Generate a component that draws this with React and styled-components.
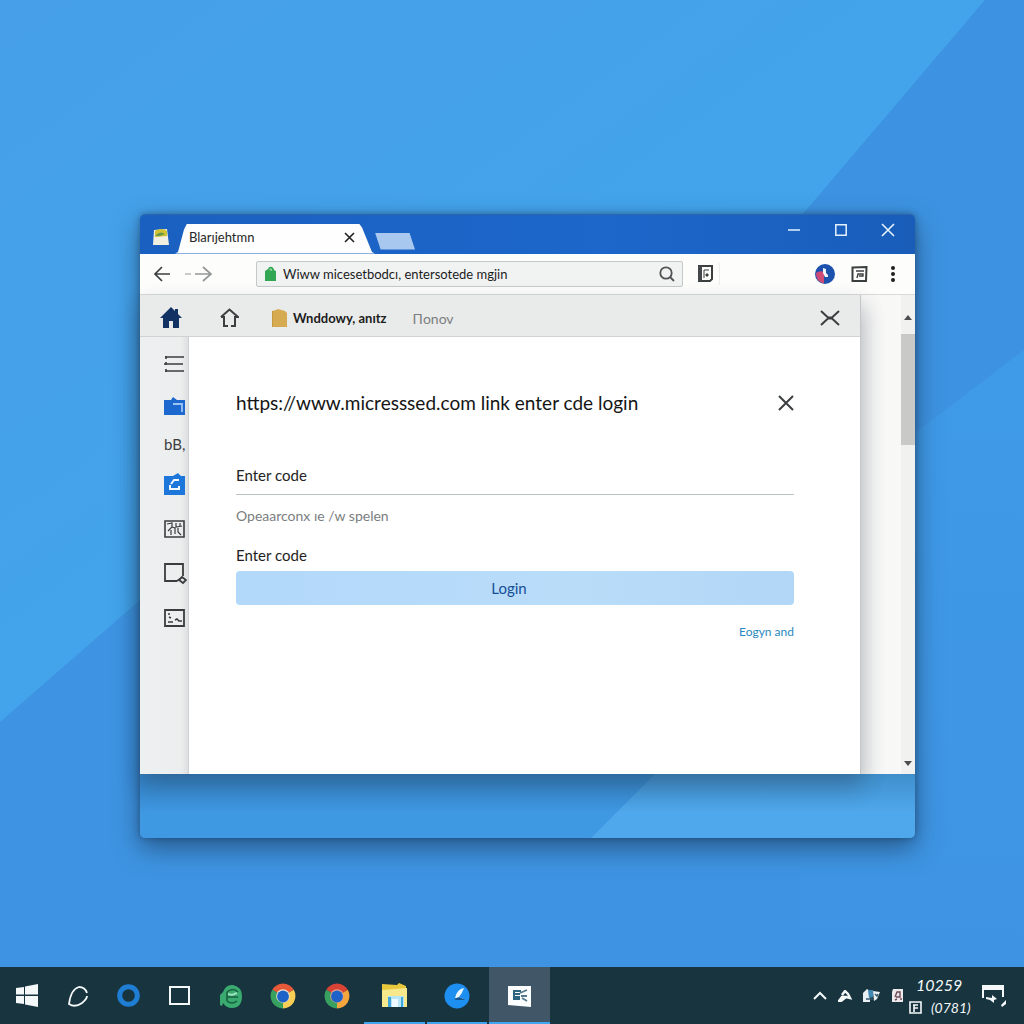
import React from "react";
import styled, { createGlobalStyle } from "styled-components";

const GlobalStyle = createGlobalStyle`
  *, *::before, *::after { box-sizing: border-box; }
  body { margin: 0; }
  body, button, input { font-family: Lato, "Open Sans", "Liberation Sans", sans-serif; }
  button { border: 0; padding: 0; background: none; color: inherit; cursor: pointer; }
  svg { display: block; flex: none; }
  h1, p { margin: 0; font-weight: 400; }
`;

const Desktop = styled.div`
  position: relative;
  isolation: isolate;
  min-height: 100vh;
  display: flex;
  flex-direction: column;
  background: #3e94e2;
`;

const WallpaperArt = styled.svg`
  position: absolute;
  inset: 0;
  z-index: -1;
  width: 100%;
  height: 100%;
`;

const Workspace = styled.main`
  flex: 1;
  display: flex;
  flex-direction: column;
  justify-content: center;
  padding: 84px 109px 0 140px;
`;

const Window = styled.section`
  display: flex;
  flex-direction: column;
  border-radius: 5px;
  box-shadow: 0 10px 26px rgba(25, 50, 80, 0.6), 0 0 6px rgba(25, 55, 90, 0.5);
`;

const TitleBar = styled.header`
  display: flex;
  align-items: flex-end;
  height: 40px;
  padding: 0 16px 0 12px;
  border-top: 1px solid #2b65ad;
  border-radius: 5px 5px 0 0;
  background: linear-gradient(90deg, #1a60c0, #1d67ca 60%, #195db9);
`;

const AppMark = styled.span`
  align-self: center;
  padding-top: 6px;
`;

const BrowserTab = styled.div`
  display: flex;
  align-items: center;
  justify-content: space-between;
  width: 200px;
  height: 30px;
  margin-left: 5px;
  padding: 0 20px 3px 14px;
  background: #fdfefd;
  clip-path: polygon(0 100%, 3px 95%, 9px 6px, 12px 0, 184px 0, 187px 4px, 197px 95%, 100% 100%);
  font-size: 13px;
  color: #262626;
`;

const NewTab = styled.button`
  width: 40px;
  height: 17px;
  margin-bottom: 4px;
  background: #a9c8f0;
  clip-path: polygon(0 0, 86% 0, 100% 100%, 14% 100%);
`;

const WindowControls = styled.div`
  display: flex;
  align-self: flex-start;
  gap: 25px;
  margin: 4px 0 0 auto;
  color: #e4f2ff;
`;

const IconButton = styled.button`
  display: grid;
  place-items: center;
  flex: none;
  width: ${({ $size = 22 }) => $size}px;
  height: ${({ $size = 22 }) => $size}px;
  color: ${({ $color = "#3c3f40" }) => $color};
`;

const Toolbar = styled.div`
  display: flex;
  align-items: center;
  height: 41px;
  padding: 0 11px;
  border-bottom: 1px solid #d9dbda;
  background: #fdfefc;
`;

const History = styled.nav`
  display: flex;
  align-items: center;
  gap: 12px;
  width: 105px;
`;

const AddressBar = styled.form`
  flex: 0 1 427px;
  display: flex;
  align-items: center;
  gap: 6px;
  min-width: 0;
  height: 26px;
  padding: 0 4px 0 7px;
  border: 1px solid #c6c9c9;
  border-radius: 2px;
  background: #f1f3f3;
`;

const AddressInput = styled.input`
  flex: 1;
  min-width: 0;
  padding: 0;
  border: 0;
  outline: 0;
  background: none;
  font-size: 13px;
  color: #1c1c1c;
`;

const PageAction = styled.div`
  margin-left: 11px;
  padding-right: 3px;
  border-right: 1px solid #eceeee;
`;

const Extensions = styled.div`
  display: flex;
  gap: 12px;
  margin-left: auto;
`;

const Viewport = styled.div`
  display: flex;
  min-height: 479px;
  background: #f8f8f7;
`;

const Page = styled.div`
  flex: 1;
  min-width: 0;
  display: flex;
  flex-direction: column;
  z-index: 1;
  border-right: 1px solid #c4c7c7;
  box-shadow: 4px 10px 20px rgba(60, 60, 60, 0.16), 0 12px 22px rgba(20, 45, 80, 0.22);
`;

const Ribbon = styled.nav`
  display: flex;
  align-items: center;
  height: 42px;
  padding: 6px 19px 0 20px;
  border-bottom: 1px solid #d0d3d3;
  background: #e9eaea;
`;

const RibbonHome = styled.div`
  display: flex;
  gap: 36px;
  width: 111px;
`;

const RibbonLink = styled.a`
  display: flex;
  align-items: center;
  gap: 5px;
  margin-right: 26px;
  font-size: ${({ $active }) => ($active ? 13 : 14)}px;
  font-weight: ${({ $active }) => ($active ? 700 : 400)};
  color: ${({ $active }) => ($active ? "#1c1c1c" : "#7c7f80")};
  text-decoration: none;
`;

const RibbonClose = styled.div`
  margin-left: auto;
`;

const Columns = styled.div`
  flex: 1;
  display: flex;
`;

const Sidebar = styled.aside`
  display: flex;
  flex-direction: column;
  align-items: flex-start;
  gap: 24px;
  width: 49px;
  padding: 18px 0 0 24px;
  border-right: 1px solid #cfd2d2;
  background: linear-gradient(90deg, #edf0f1, #eceeee 85%, #dddfe0);
`;

const SideButton = styled.button`
  font-size: 15px;
  line-height: 10px;
  color: #3a3d3e;
`;

const Panel = styled.article`
  flex: 1;
  padding: 52px 66px 0 47px;
  background: #fefffe;
`;

const PanelHeader = styled.header`
  display: flex;
  align-items: center;
  justify-content: space-between;
  height: 28px;
`;

const Heading = styled.h1`
  font-size: 19px;
  line-height: 28px;
  color: #151515;
`;

const CodeForm = styled.form`
  display: flex;
  flex-direction: column;
  padding-top: 40px;
`;

const CodeInput = styled.input`
  width: 100%;
  height: 38px;
  padding: 0;
  border: 0;
  border-bottom: 1px solid #bcc3c2;
  outline: 0;
  background: none;
  font-size: 15px;
  color: #232323;
`;

const Hint = styled.p`
  padding-top: 9px;
  font-size: 14px;
  line-height: 24px;
  color: #7b7e7f;
`;

const Label = styled.label`
  padding: 15px 0 4px;
  font-size: 15px;
  line-height: 24px;
  color: #1e1e1e;
`;

const Submit = styled.button`
  height: 34px;
  padding-right: 12px;
  border-radius: 4px;
  background: linear-gradient(90deg, #b2d8fa, #b9dcf9 60%, #b2d6f6);
  font-size: 15px;
  color: #164e96;
`;

const SideLink = styled.a`
  align-self: flex-end;
  margin-top: 17px;
  font-size: 12px;
  line-height: 20px;
  color: #2b88c0;
  text-decoration: none;
`;

const Gutter = styled.div`
  display: flex;
  justify-content: flex-end;
  width: 54px;
`;

const ScrollTrack = styled.div`
  display: flex;
  flex-direction: column;
  align-items: center;
  width: 14px;
  padding: 20px 0 8px;
  background: #f1f1f0;
`;

const ScrollThumb = styled.div`
  width: 100%;
  height: 111px;
  margin: 14px 0 auto;
  background: #c9c9c8;
`;

const GlassFooter = styled.footer`
  height: 64px;
  border-radius: 0 0 5px 5px;
  background:
    linear-gradient(rgba(20, 70, 115, 0.26), transparent 60%),
    linear-gradient(135deg, transparent calc(50% + 67px), #4fa8eb calc(50% + 68px)),
    #3f98e2;
`;

const Taskbar = styled.footer`
  display: flex;
  align-items: stretch;
  height: 57px;
  padding: 0 17px 0 1px;
  background: #18343f;
  color: #f4f8f9;
`;

const TaskButton = styled.button`
  display: grid;
  place-items: center;
  width: ${({ $width = 51 }) => $width}px;
  border-bottom: 2px solid ${({ $running }) => ($running ? "#42a5f0" : "transparent")};
  border-top: 2px solid transparent;
  background: ${({ $active }) => ($active ? "#415768" : "transparent")};
`;

const RunningApps = styled.div`
  display: flex;
  gap: 2px;
`;

const Tray = styled.div`
  display: flex;
  align-items: center;
  gap: 4px;
  margin-left: auto;
`;

const TrayIcons = styled.div`
  display: flex;
  align-items: center;
  gap: 9px;
`;

const Clock = styled.time`
  display: flex;
  flex-direction: column;
  align-items: flex-start;
  width: 68px;
  font-size: 16px;
  font-style: italic;
  line-height: 23px;
`;

const ClockRow = styled.span`
  display: flex;
  align-items: center;
  gap: 9px;
  padding-left: ${({ $inset = 0 }) => $inset}px;
`;

const ClockDate = styled.span`
  font-size: 14px;
`;

const Icon = ({ w = 20, h = w, stroke = 2, children }) => (
  <svg width={w} height={h} viewBox={`0 0 ${w} ${h}`} fill="none" stroke="currentColor" strokeWidth={stroke} aria-hidden="true">
    {children}
  </svg>
);

const Cross = ({ size, stroke }) => (
  <Icon w={size} stroke={stroke}>
    <path d={`M1 1L${size - 1} ${size - 1}M${size - 1} 1L1 ${size - 1}`} />
  </Icon>
);

const Wallpaper = () => (
  <WallpaperArt viewBox="0 0 1024 1024" preserveAspectRatio="none" aria-hidden="true">
    <defs>
      <linearGradient id="sky" x1="0" y1="0" x2="1" y2="1">
        <stop offset="0" stopColor="#469fe8" />
        <stop offset="0.5" stopColor="#43a4eb" />
        <stop offset="1" stopColor="#429eea" />
      </linearGradient>
      <linearGradient id="edge" x1="0" y1="0" x2="0" y2="1">
        <stop offset="0" stopColor="#3f9ae8" />
        <stop offset="1" stopColor="#3e94e2" />
      </linearGradient>
    </defs>
    <path fill="url(#sky)" d="M0 0H985L560 500L140 600L0 722Z" />
    <path fill="#3d93e1" d="M985 0H1024V350L915 433L500 774L560 500Z" />
    <path fill="url(#edge)" d="M1024 350L915 433L800 520V967H1024Z" />
  </WallpaperArt>
);

const Chrome = ({ warm }) => (
  <Icon w={26} stroke={0}>
    <path fill={warm ? "#d94336" : "#e8593a"} d="M13 13L2.200 6.800A12.500 12.500 0 0 1 23.800 6.800Z" />
    <path fill={warm ? "#f3a63b" : "#f8cf55"} d="M13 13L23.800 6.800A12.500 12.500 0 0 1 13 25.500Z" />
    <path fill="#38a160" d="M13 13V25.500A12.500 12.500 0 0 1 2.200 6.800Z" />
    <circle cx="13" cy="13" r="6.800" fill={warm ? "#e9a08a" : "#eee7d0"} />
    <circle cx="13" cy="13.500" r="5.900" fill="#1d62c8" />
  </Icon>
);

export default function App() {
  return (
    <Desktop>
      <GlobalStyle />
      <Wallpaper />
      <Workspace>
        <Window aria-label="Browser">
          <TitleBar>
            <AppMark>
              <Icon w={18} stroke={0}>
                <path fill="#f1efe0" d="M2 2L15 1L17 17H1Z" />
                <path fill="#d0c332" d="M3 3Q9-1 15 3L15 8L3 9Z" />
                <path fill="#679849" d="M3 8Q8 2 13 6L8 8Z" />
              </Icon>
            </AppMark>
            <BrowserTab>
              <span>Blarıjehtmn</span>
              <IconButton $size={12} $color="#222" aria-label="Close tab"><Cross size={11} stroke={1.600} /></IconButton>
            </BrowserTab>
            <NewTab aria-label="New tab" />
            <WindowControls>
              <IconButton $color="inherit" aria-label="Minimize"><Icon w={12} stroke={1.500}><path d="M0 6H12" /></Icon></IconButton>
              <IconButton $color="inherit" aria-label="Maximize"><Icon w={12} stroke={1.500}><path d="M.8.8H11.200V11.200H.8Z" /></Icon></IconButton>
              <IconButton $color="inherit" aria-label="Close window"><Cross size={14} stroke={1.600} /></IconButton>
            </WindowControls>
          </TitleBar>

          <Toolbar>
            <History aria-label="History">
              <IconButton aria-label="Back"><Icon w={18} h={16} stroke={1.700}><path d="M17 8H2M9 1L2 8L9 15" /></Icon></IconButton>
              <IconButton $size={28} $color="#949798" aria-label="Forward"><Icon w={28} h={16} stroke={1.700}><path d="M0 8H6" opacity=".6" /><path d="M10 8H26M18 1L26 8L18 15" /></Icon></IconButton>
            </History>
            <AddressBar onSubmit={(e) => e.preventDefault()}>
              <Icon w={13} h={15} stroke={0}>
                <path fill="#31a653" d="M1 5L4 3Q5 0 8 1Q10 2 10 4L12 5V15H1Z" />
                <path fill="#8ad49a" d="M5 4Q6 1 8 3V5Z" />
              </Icon>
              <AddressInput aria-label="Address" defaultValue="Wiww micesetbodcı, entersotede mgjin" />
              <IconButton aria-label="Search" $color="#505354">
                <Icon w={16} stroke={1.800}><circle cx="7" cy="7" r="5.700" /><path d="M11 11L15 15" /></Icon>
              </IconButton>
            </AddressBar>
            <PageAction>
              <IconButton aria-label="Page actions">
                <Icon w={17}>
                  <path d="M2 1H15V14L13 16H2Z" />
                  <path d="M3 1V16" stroke="#44484a" strokeWidth="4" />
                  <path d="M7 13V5H12" strokeWidth="1" />
                  <path d="M9 9H11V11H9Z" fill="currentColor" strokeWidth="1" />
                </Icon>
              </IconButton>
            </PageAction>
            <Extensions>
              <IconButton aria-label="Profile">
                <Icon w={20} stroke={0}>
                  <circle cx="10" cy="10" r="10" fill="#1c52ad" />
                  <path fill="#d04a76" d="M9 8V19.500Q1 18 1 9Q5 6 9 8Z" />
                  <path fill="#f3f5fc" d="M8 4L11 5V9L13 11V13H10L8 9Z" />
                </Icon>
              </IconButton>
              <IconButton aria-label="Reading list">
                <Icon w={17} h={16}>
                  <path d="M1.500 1.500L15.500 1L15 15H1.500Z" />
                  <path d="M5 5H13M6 12L7 8H12V10H8" strokeWidth="1.400" />
                </Icon>
              </IconButton>
              <IconButton $color="#1e2021" aria-label="Menu">
                <Icon w={4} h={18} stroke={0}>
                  <g fill="currentColor"><circle cx="2" cy="3" r="2" /><circle cx="2" cy="9" r="2" /><circle cx="2" cy="15" r="2" /></g>
                </Icon>
              </IconButton>
            </Extensions>
          </Toolbar>

          <Viewport>
            <Page>
              <Ribbon aria-label="Sections">
                <RibbonHome>
                  <IconButton $color="#133264" aria-label="Home">
                    <Icon w={22} stroke={0}><path fill="currentColor" d="M11 0L15 4V2H18V7L22 11H19V21H13V14H9V21H3V11H0Z" /></Icon>
                  </IconButton>
                  <IconButton aria-label="Start page">
                    <Icon w={19} h={20}><path d="M1 9L9.500 1.500L18 9H15V18H11M8 18H4V9H1" /></Icon>
                  </IconButton>
                </RibbonHome>
                <RibbonLink href="#windows" $active>
                  <Icon w={17} h={18} stroke={0}><path fill="#d6aa50" d="M1 2L5 1L7 0L14 2L16 4V18H1Z" /><path fill="#c89a40" d="M1 2H2V18H1Z" /></Icon>
                  Wnddowy, anıtz
                </RibbonLink>
                <RibbonLink href="#more">Пonov</RibbonLink>
                <RibbonClose>
                  <IconButton aria-label="Close section"><Icon w={20} h={16}><path d="M1 1L8 7.500H12L19 1M1 15L8 8.500H12L19 15" /></Icon></IconButton>
                </RibbonClose>
              </Ribbon>

              <Columns>
                <Sidebar>
                  <SideButton aria-label="List"><Icon w={21} h={18}><path d="M1 2H20M0 9H19M1 16H20M2 1V4M2 7V10M2 14V17" strokeWidth="1.600" /></Icon></SideButton>
                  <SideButton aria-label="Folder">
                    <Icon w={22} h={18} stroke={0}>
                      <path fill="#1c68cf" d="M0 3H7L9 0L13 3H21V18H0Z" />
                      <path d="M9 7H18V15" stroke="#9bc4f6" strokeWidth="1.800" />
                    </Icon>
                  </SideButton>
                  <SideButton>bB,</SideButton>
                  <SideButton aria-label="Sync">
                    <Icon w={22} stroke={0}>
                      <path fill="#1d76da" d="M0 3H9L14 0L17 3H21V22H0Z" />
                      <path d="M15 7H10L7 11M6 12V16H15V13" stroke="#f2f8ff" strokeWidth="2" />
                    </Icon>
                  </SideButton>
                  <SideButton aria-label="Map">
                    <Icon w={21} h={20} stroke={1.600}><path d="M1 2H20V18H1Z" /><path d="M3 5L8 4V8L4 12M8 8L11 9V15M12 4V8L18 7M7 11V16M14 9V13L17 16M16 4V7" strokeWidth="1.200" /></Icon>
                  </SideButton>
                  <SideButton aria-label="Inspect">
                    <Icon w={23} h={22} stroke={1.800}><path d="M13 18H1V1H19V13M13 18L16 16" /><path d="M15 17L18 14L22 17L19 20Z" /></Icon>
                  </SideButton>
                  <SideButton aria-label="Console">
                    <Icon w={21} h={18} stroke={1.800}><path d="M1 1H20V17H1Z" /><path d="M4 5H6M5 8L7 9M4 13H9M11 11L13 10L15 12H18" strokeWidth="1.600" /></Icon>
                  </SideButton>
                </Sidebar>

                <Panel>
                  <PanelHeader>
                    <Heading>https://www.micresssed.com link enter cde login</Heading>
                    <IconButton $size={16} aria-label="Close dialog"><Cross size={16} stroke={2} /></IconButton>
                  </PanelHeader>
                  <CodeForm onSubmit={(e) => e.preventDefault()}>
                    <CodeInput id="code" aria-describedby="hint" defaultValue="Enter code" />
                    <Hint id="hint">Opeaarconx ıe /w spelen</Hint>
                    <Label htmlFor="code">Enter code</Label>
                    <Submit type="submit">Login</Submit>
                    <SideLink href="#sign-in">Eogyn and</SideLink>
                  </CodeForm>
                </Panel>
              </Columns>
            </Page>
            <Gutter>
              <ScrollTrack>
                <Icon w={8} h={5} stroke={0}><path fill="#4b4d4e" d="M0 5L4 0L8 5Z" /></Icon>
                <ScrollThumb />
                <Icon w={8} h={5} stroke={0}><path fill="#4b4d4e" d="M0 0L4 5L8 0Z" /></Icon>
              </ScrollTrack>
            </Gutter>
          </Viewport>
          <GlassFooter />
        </Window>
      </Workspace>

      <Taskbar>
        <TaskButton aria-label="Start">
          <Icon w={22} h={23} stroke={0}><path fill="currentColor" d="M0 4L8 3V10.500H0ZM9 2.500L22 0V10.500H9ZM0 12H8V20L0 19ZM9 12H22V23L9 20.500Z" /></Icon>
        </TaskButton>
        <TaskButton aria-label="Search">
          <Icon w={22}><path d="M20 8Q18 2 12 2Q4 4 2 19Q8 23 15 18Q20 14 20 11" strokeWidth="1.800" /></Icon>
        </TaskButton>
        <TaskButton aria-label="Assistant">
          <Icon w={23}><circle cx="11.500" cy="11.500" r="8.800" stroke="#1f7ed4" strokeWidth="5" /></Icon>
        </TaskButton>
        <TaskButton aria-label="Task view">
          <Icon w={21} h={19}><path d="M1 1H20V18H1Z" /></Icon>
        </TaskButton>
        <TaskButton aria-label="Edge">
          <Icon w={24} stroke={0}>
            <path fill="#3aaa70" d="M1 21V11L4 8Q7 0 14 1Q23 3 23 12Q23 24 13 24Q7 24 4 19L3 22Z" />
            <path d="M19 8Q14 3 8 8M8 13H19M8 17Q13 21 18 17M8 8V17" stroke="#17623f" strokeWidth="1.600" />
            <path d="M9 10L13 11L18 9" stroke="#9be0bc" strokeWidth="2" />
          </Icon>
        </TaskButton>
        <TaskButton $width={54} aria-label="Chrome"><Chrome /></TaskButton>
        <TaskButton $width={54} aria-label="Chrome profile"><Chrome warm /></TaskButton>
        <RunningApps>
          <TaskButton $width={61} $running aria-label="File Explorer">
            <Icon w={27} h={25} stroke={0}>
              <path fill="#e8c93e" d="M1 1L16 2L18 0L25 3V10H1Z" />
              <path fill="#f7e88b" d="M1 7L26 5V24H1Z" />
              <path fill="#b9e6f6" d="M7 13H23V24H7Z" />
              <path fill="#42a6d8" d="M7 14H10V24H7ZM20 14H22V24H20Z" />
              <path fill="#eefaff" d="M11 16H17V24H11Z" />
            </Icon>
          </TaskButton>
          <TaskButton $width={60} $running aria-label="Browser">
            <Icon w={26} stroke={0}>
              <circle cx="13" cy="13" r="12.500" fill="#1d8ff0" />
              <path fill="#e9f5ff" d="M11 15Q13 6 20 5Q18 11 15 14L22 17Z" />
              <path fill="#155794" d="M10 16L15 14L22 17L12 17Z" />
              <path d="M6 21L11 16" stroke="#bfe2ff" />
            </Icon>
          </TaskButton>
          <TaskButton $width={61} $running $active aria-label="Sign in">
            <Icon w={24} h={22} stroke={0}>
              <path fill="#fbfdfe" d="M0 1H23V22L0 20Z" />
              <path d="M5 6H13M7 9H12M7 12H12M6 6V14H12" stroke="#2c6681" strokeWidth="2" />
              <path d="M12 8L19 5M13 11H19M14 13L19 16" stroke="#56788a" strokeWidth="1.800" />
            </Icon>
          </TaskButton>
        </RunningApps>
        <Tray>
          <TrayIcons>
            <IconButton $size={16} $color="inherit" aria-label="Show hidden icons"><Icon w={14} h={9}><path d="M1 8L7 2L13 8" /></Icon></IconButton>
            <IconButton $size={16} $color="inherit" aria-label="Account"><Icon w={14} h={12}><path d="M4 5L7 1L10 4L12 8L8 7L3 11H1L4 7H9" strokeWidth="2.400" /></Icon></IconButton>
            <IconButton $size={18} $color="inherit" aria-label="Security">
              <Icon w={18} h={15} stroke={0}>
                <path fill="#e8f0f4" d="M1 5L5 1L8 3V14H1Z" /><path fill="#3f86b3" d="M6 2H11V9L7 10Z" /><path fill="#e8f0f4" d="M11 3L18 4L15 11L12 13Z" /><path d="M13 6L15 8L16 6M4 11H11" stroke="#33566a" strokeWidth="1.400" />
              </Icon>
            </IconButton>
            <IconButton $size={16} $color="inherit" aria-label="Language">
              <Icon w={13} h={15} stroke={0}><path fill="#eee9ea" d="M2 1H12V14H1V4Z" /><path d="M4 9L6 4H9V9H5M4 12L6 11M9 11H11" stroke="#6e4a56" strokeWidth="1.400" /></Icon>
            </IconButton>
          </TrayIcons>
          <Clock>
            <ClockRow $inset={7}>10259</ClockRow>
            <ClockRow>
              <Icon w={13} stroke={1.600}><path d="M1 1H12V12H1ZM4 4H9M5 4V11M5 7H9" /></Icon>
              <ClockDate>(0781)</ClockDate>
            </ClockRow>
          </Clock>
          <IconButton $size={26} $color="inherit" aria-label="Notifications">
            <Icon w={26} h={24} stroke={0}>
              <path fill="currentColor" d="M1 1H23V6H1ZM1 6H3V14H1ZM21 6H23V13H21ZM5 13L11 14V11L16 15L13 16V19L9 16L5 15ZM20 21L25 16V20L21 23Z" />
            </Icon>
          </IconButton>
        </Tray>
      </Taskbar>
    </Desktop>
  );
}
